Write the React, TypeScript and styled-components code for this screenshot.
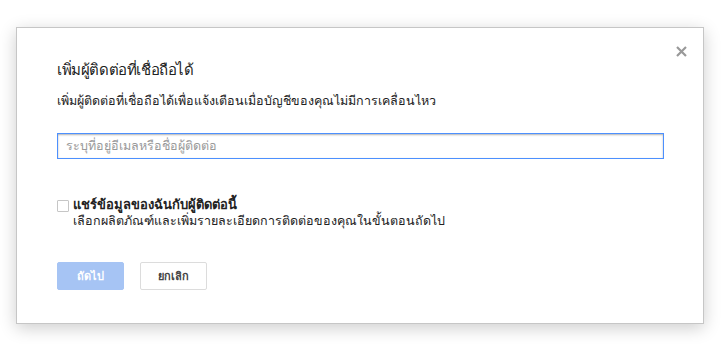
import React from "react";
import styled, { createGlobalStyle } from "styled-components";

const Global = createGlobalStyle`
  html, body { margin: 0; padding: 0; background: #ffffff; }
  body { font-family: Arial, "Liberation Sans", "Noto Sans", sans-serif; }
`;

const Page = styled.div`
  width: 728px;
  height: 344px;
  padding: 27px 0 0 16px;
  box-sizing: border-box;
`;

const Dialog = styled.div`
  position: relative;
  width: 688px;
  height: 297px;
  box-sizing: border-box;
  background: #fff;
  border: 1px solid #c6c6c6;
  box-shadow: 0 4px 16px rgba(0, 0, 0, 0.2);
  padding: 30px 40px 0 40px;
  display: flex;
  flex-direction: column;
`;

const Close = styled.button`
  position: absolute;
  top: 16px;
  right: 15px;
  width: 14px;
  height: 14px;
  padding: 0;
  border: none;
  background: transparent;
  display: flex;
  align-items: center;
  justify-content: center;
`;

const Title = styled.div`
  font-size: 15px;
  letter-spacing: -0.4px;
  color: #222;
  line-height: 24px;
  margin: 0 0 9px 0;
`;

const Desc = styled.div`
  font-size: 12.5px;
  color: #222;
  line-height: 20px;
  margin-bottom: 22px;
`;

const Input = styled.input`
  width: 607px;
  height: 26px;
  box-sizing: border-box;
  border: 1px solid #4d90fe;
  box-shadow: inset 0 1px 2px rgba(0, 0, 0, 0.3);
  padding: 0 8px;
  font-size: 12.5px;
  font-family: inherit;
  color: #222;
  outline: none;
  &::placeholder { color: #999; }
`;

const CheckRow = styled.label`
  display: flex;
  align-items: flex-start;
  gap: 4px;
  margin-top: 37px;
`;

const Box = styled.span`
  width: 10px;
  height: 10px;
  margin-top: 4px;
  border: 1px solid #c6c6c6;
  border-radius: 1px;
  background: #fff;
  flex: none;
`;

const CheckText = styled.div`
  display: flex;
  flex-direction: column;
`;

const CheckLabel = styled.span`
  font-size: 13px;
  font-weight: bold;
  color: #222;
  line-height: 17px;
`;

const CheckHint = styled.span`
  font-size: 12.5px;
  color: #222;
  line-height: 17px;
`;

const Buttons = styled.div`
  display: flex;
  gap: 16px;
  margin-top: 32px;
`;

const Btn = styled.button<{ $primary?: boolean }>`
  min-width: 67px;
  height: 28px;
  padding: 0 16px;
  box-sizing: border-box;
  border-radius: 2px;
  font-family: inherit;
  font-size: 11px;
  font-weight: bold;
  border: 1px solid ${(p) => (p.$primary ? "#a6c4f4" : "#dcdcdc")};
  background: ${(p) => (p.$primary ? "#a6c4f4" : "#fff")};
  color: ${(p) => (p.$primary ? "#fff" : "#444")};
`;

export default function App() {
  return (
    <>
      <Global />
      <Page>
        <Dialog>
          <Close aria-label="close">
            <svg width="11" height="11" viewBox="0 0 11 11">
              <path d="M1 1L10 10M10 1L1 10" stroke="#999" strokeWidth="2.2" />
            </svg>
          </Close>
          <Title>เพิ่มผู้ติดต่อที่เชื่อถือได้</Title>
          <Desc>เพิ่มผู้ติดต่อที่เชื่อถือได้เพื่อแจ้งเตือนเมื่อบัญชีของคุณไม่มีการเคลื่อนไหว</Desc>
          <Input placeholder="ระบุที่อยู่อีเมลหรือชื่อผู้ติดต่อ" />
          <CheckRow>
            <Box />
            <CheckText>
              <CheckLabel>แชร์ข้อมูลของฉันกับผู้ติดต่อนี้</CheckLabel>
              <CheckHint>เลือกผลิตภัณฑ์และเพิ่มรายละเอียดการติดต่อของคุณในขั้นตอนถัดไป</CheckHint>
            </CheckText>
          </CheckRow>
          <Buttons>
            <Btn $primary>ถัดไป</Btn>
            <Btn>ยกเลิก</Btn>
          </Buttons>
        </Dialog>
      </Page>
    </>
  );
}
